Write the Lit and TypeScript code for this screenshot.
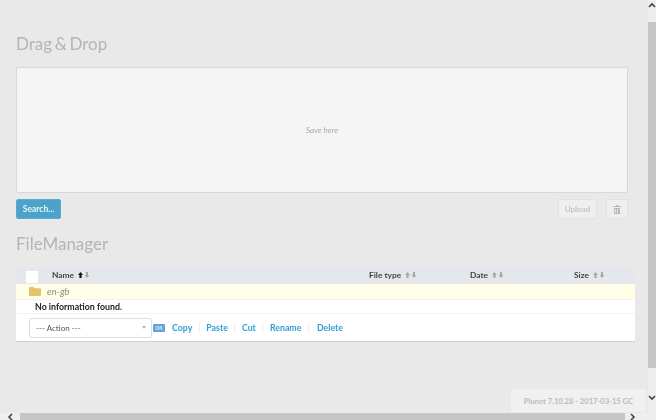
import { LitElement, html, css } from "lit";
import { customElement } from "lit/decorators.js";

const sort = (active = false) => html`<span class="sort ${active ? "active" : ""}">
  <svg width="12" height="8" viewBox="0 0 12 8">
    <path class="up" d="M2.5 1 5 4H3.6v3H1.4V4H0z"></path>
    <path class="down" d="M8 1h2v3h1.4L9 7 6.6 4H8z"></path>
  </svg></span>`;

@customElement("app-root")
export class AppRoot extends LitElement {
  static styles = css`
    :host { display: grid; grid-template-columns: 648px 8px; grid-template-rows: 413px 7px; width: 656px; height: 420px; overflow: hidden; background: #e9e9e9; font-family: Lato, "Liberation Sans", sans-serif; color: #333; }
    .page { position: relative; padding: 33px 20px 0 16px; box-sizing: border-box; min-width: 0; overflow: hidden; filter: blur(0.5px); }
    h2 { margin: 0; font-size: 17px; line-height: 21px; font-weight: 400; color: #b4b4b4; word-spacing: -1.7px; }
    .drop { box-sizing: border-box; width: 612px; height: 126px; margin-top: 13px; display: flex; align-items: center; justify-content: center; background: #f5f5f5; border: 1px solid #d8d8d8; border-radius: 2px; font-size: 8px; font-style: italic; color: #aaa; }
    .controls { width: 612px; margin-top: 6px; display: flex; align-items: center; gap: 9px; }
    button { box-sizing: border-box; height: 20px; margin: 0; padding: 0; font: inherit; border-radius: 2px; }
    .search { width: 45px; background: #4ba3c9; border: 1px solid #57abcf; color: #e8f3f8; font-size: 8.5px; font-weight: 700; }
    .spacer { flex: 1; }
    .upload { width: 39px; background: #efefef; border: 1px solid #e2e2e2; color: #c4c4c4; font-size: 8px; font-weight: 700; }
    .trash { width: 22px; background: #efefef; border: 1px solid #e2e2e2; display: flex; align-items: center; justify-content: center; }
    .fm { margin-top: 14px; }
    .table { width: 618.5px; margin-top: 13px; background: #fff; border-bottom: 1px solid #cfcfcf; font-size: 8.8px; }
    .head { display: grid; grid-template-columns: 36px 317px 101px 104px 1fr; height: 17px; align-items: center; background: #e4e7eb; font-size: 8.4px; font-weight: 700; color: #444; padding-bottom: 1px; box-sizing: border-box; }
    .check { width: 12px; height: 12px; margin-left: 10px; background: #fff; border-radius: 1px; margin-top: 3px; }
    .sort { display: inline-block; margin-left: 2px; vertical-align: -1px; }
    .sort .up, .sort .down { fill: #a9a9a9; }
    .sort.active .up { fill: #111; }
    .folder-row { height: 15px; display: flex; align-items: center; gap: 6px; padding-left: 13px; background: #fffee6; font-size: 9.5px; font-style: italic; color: #8a8a84; }
    .empty { height: 14px; display: flex; align-items: center; padding-left: 19px; border-top: 1px solid #f3f3f3; font-weight: 700; color: #222; box-sizing: border-box; }
    .actions { height: 28px; display: flex; align-items: center; border-top: 1px solid #f3f3f3; padding-left: 13px; box-sizing: border-box; }
    .select { box-sizing: border-box; width: 123px; height: 20px; display: flex; align-items: center; justify-content: space-between; padding: 0 5px 0 6px; background: #fff; border: 1px solid #dedede; border-radius: 2px; color: #555; font-size: 8px; }
    .caret { width: 0; height: 0; border: 2.5px solid transparent; border-top: 3px solid #b5b5b5; border-bottom: 0; }
    .ok { box-sizing: border-box; width: 12px; height: 8px; margin: 0 7px 0 1px; background: #5fa3d4; color: #e6f1f9; font-size: 5px; font-weight: 700; line-height: 8px; text-align: center; border-radius: 1px; }
    .link { color: #2f9fd6; font-weight: 700; }
    .sep { width: 1px; height: 10px; margin: 0 6.5px; background: #eeeeee; }
    .sep.wide { margin-right: 8px; }
    .version { position: absolute; right: 2px; bottom: 1px; box-sizing: border-box; width: 135px; height: 23px; display: flex; align-items: center; justify-content: center; background: #f0f0f0; color: #bcbcbc; font-size: 7.6px; font-weight: 700; }
    .vbar { background: #eeeeee; display: grid; grid-template-rows: 22px 346px 1fr; justify-items: center; }
    .vbar .up-arrow { margin-top: 2px; }
    .vbar .down-arrow { align-self: end; margin-bottom: 12px; }
    .hbar { background: #eeeeee; display: grid; grid-template-columns: 20px 605px 1fr; align-items: center; }
    .thumb { background: #c6c6c6; }
    .vbar .thumb { width: 8px; }
    .hbar .thumb { height: 100%; }
    .left-arrow { justify-self: center; }
    .right-arrow { justify-self: start; margin-left: 5px; }
    .corner { background: #eeeeee; }
  `;

  render() {
    return html`
      <main class="page">
        <h2>Drag &amp; Drop</h2>
        <div class="drop">Save here</div>
        <div class="controls">
          <button class="search">Search...</button>
          <span class="spacer"></span>
          <button class="upload">Upload</button>
          <button class="trash" aria-label="Delete">
            <svg width="8" height="9" viewBox="0 0 8 9"><path fill="#b9b9b9" d="M3 0h2v1h3v1H0V1h3zM1 3h6v6H1zm1.2 1v4h.8V4zm2 0v4H5V4z" fill-rule="evenodd"></path></svg>
          </button>
        </div>
        <h2 class="fm">FileManager</h2>
        <div class="table">
          <div class="head">
            <span class="check"></span>
            <span>Name ${sort(true)}</span>
            <span>File type ${sort()}</span>
            <span>Date ${sort()}</span>
            <span>Size ${sort()}</span>
          </div>
          <div class="folder-row">
            <svg width="12" height="9" viewBox="0 0 12 9"><path fill="#e2c46e" d="M1 0h3.5l1 1.2H11a1 1 0 0 1 1 1V8a1 1 0 0 1-1 1H1a1 1 0 0 1-1-1V1a1 1 0 0 1 1-1z"></path></svg>
            <span>en-gb</span>
          </div>
          <div class="empty">No information found.</div>
          <div class="actions">
            <div class="select"><span>--- Action ---</span><span class="caret"></span></div>
            <span class="ok">OK</span>
            <span class="link">Copy</span><span class="sep"></span>
            <span class="link">Paste</span><span class="sep"></span>
            <span class="link">Cut</span><span class="sep"></span>
            <span class="link">Rename</span><span class="sep wide"></span>
            <span class="link">Delete</span>
          </div>
        </div>
        <div class="version">Plunet 7.10.28 - 2017-03-15 GC</div>
      </main>
      <div class="vbar">
        <svg class="up-arrow" width="8" height="6" viewBox="0 0 8 6"><path fill="none" stroke="#444" stroke-width="1.6" d="M1 5l3-3 3 3"></path></svg>
        <div class="thumb"></div>
        <svg class="down-arrow" width="8" height="6" viewBox="0 0 8 6"><path fill="none" stroke="#444" stroke-width="1.6" d="M1 1l3 3 3-3"></path></svg>
      </div>
      <div class="hbar">
        <svg class="left-arrow" width="6" height="8" viewBox="0 0 6 8"><path fill="none" stroke="#444" stroke-width="1.6" d="M5 1L2 4l3 3"></path></svg>
        <div class="thumb"></div>
        <svg class="right-arrow" width="6" height="8" viewBox="0 0 6 8"><path fill="none" stroke="#444" stroke-width="1.6" d="M1 1l3 3-3 3"></path></svg>
      </div>
      <div class="corner"></div>
    `;
  }
}
